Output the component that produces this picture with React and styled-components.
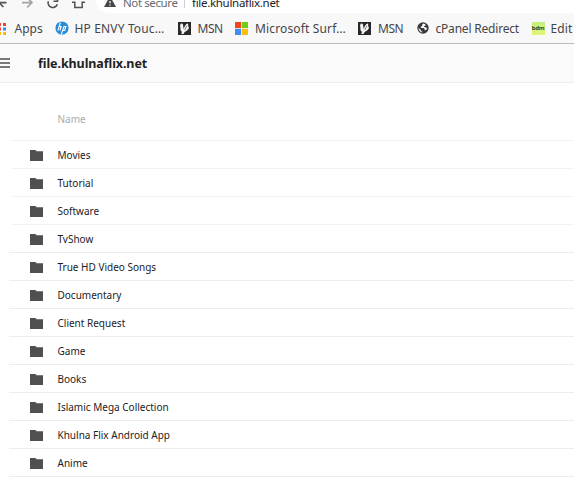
import React from "react";
import styled, { createGlobalStyle } from "styled-components";

const GlobalStyle = createGlobalStyle`
  * { box-sizing: border-box; }
  body { margin: 0; background: #fff; overflow: hidden; }
  #root { font-family: "Noto Sans", "Open Sans", sans-serif; }
`;

const Page = styled.div`
  width: 574px;
  height: 480px;
  overflow: hidden;
  background: #fff;
`;

const Label = styled.span`
  white-space: nowrap;
  letter-spacing: ${(p) => p.$spacing || 0}px;
`;

const AddressRow = styled.div`
  display: flex;
  height: 14px;
  background: #f8f8f9;
  overflow: hidden;
`;

const NavIcons = styled.svg`
  display: block;
  flex: none;
  width: 96px;
  height: 14px;
`;

const AddressField = styled.div`
  display: flex;
  flex: 1;
  height: 13px;
  background: #fff;
  border-bottom-left-radius: 13px 12px;
  padding-left: 8px;
  line-height: 16px;
  color: #68696c;
`;

const WarningIcon = styled.svg`
  display: block;
  flex: none;
  width: 12px;
  height: 10px;
  margin-right: 7px;
`;

const Security = styled(Label)`
  width: 61px;
  margin-top: -5px;
  font-size: 11.5px;
`;

const Divider = styled.i`
  width: 1px;
  height: 8px;
  margin-right: 7px;
  background: #cfcfd1;
`;

const Address = styled(Label)`
  margin-top: -5px;
  font-size: 11.5px;
  color: #202124;
`;

const BookmarkBar = styled.nav`
  display: flex;
  align-items: center;
  height: 30px;
  padding-bottom: 1px;
  background: #f8f8f9;
  border-bottom: 1px solid #b9bbbc;
  color: #44464a;
  font-size: 12px;
  line-height: 16px;
`;

const Bookmark = styled.div`
  display: flex;
  align-items: center;
  flex: none;
  width: ${(p) => p.$width}px;
  gap: ${(p) => p.$gap}px;
  svg { display: block; flex: none; }
`;

const BookmarkText = styled(Label)`
  padding-top: 2px;
`;

const Header = styled.header`
  display: flex;
  align-items: center;
  height: 39px;
  background: #fafafa;
  border-bottom: 1px solid #ededed;
`;

const MenuIcon = styled.svg`
  display: block;
  width: 10px;
  height: 12px;
  margin-right: 28px;
`;

const Title = styled.h1`
  margin: 0;
  padding-top: 2px;
  font-size: 12.5px;
  line-height: 18px;
  font-weight: 700;
  color: #222;
`;

const Listing = styled.main`
  margin-left: 9px;
`;

const ColumnHead = styled.div`
  height: 58px;
  margin-left: 3px;
  padding: 28px 0 0 45.5px;
  border-bottom: 1px solid #f2f2f2;
  color: #aaa;
  font-size: 10px;
  line-height: 16px;
`;

const Row = styled.div`
  display: flex;
  align-items: center;
  height: 28px;
  margin-left: ${(p) => (p.$faint ? 3 : 0)}px;
  padding-left: ${(p) => (p.$faint ? 18 : 21)}px;
  border-bottom: 1px solid ${(p) => (p.$faint ? "#f3f3f3" : "#ececec")};
  color: #1c1c1f;
  font-size: 10px;
  line-height: 16px;
`;

const FolderSvg = styled.svg`
  display: block;
  width: 13px;
  height: 11px;
  margin: 2px 14.5px 0 0;
`;

const Folder = () => (
  <FolderSvg viewBox="0 0 13 11">
    <path d="M0 0h5.3l1.4 1.2H13V11H0z" fill="#505050" />
  </FolderSvg>
);

const AppsIcon = () => (
  <svg width="7" height="13" viewBox="0 0 7 13">
    <path d="M0 1h1v3H0zM3 1h3v3H3z" fill="#e8453c" />
    <path d="M0 5.5h1v3H0z" fill="#e8453c" />
    <path d="M3 5.5h3v3H3z" fill="#4285f4" />
    <path d="M0 10h1v3H0zM3 10h3v3H3z" fill="#fbbc05" />
  </svg>
);

const HpIcon = () => (
  <svg width="14" height="14" viewBox="0 0 14 14">
    <circle cx="7" cy="7" r="6.6" fill="#278cd8" />
    <path d="M5.4 1.5 2.9 9.5M4.2 5.5h1.9L4.9 9.5M9 5.5l-2.6 7.5M8.8 5.5h2.1L9.6 9.5H7.8" fill="none" stroke="#fff" strokeWidth="1.1" />
  </svg>
);

const MsnIcon = () => (
  <svg width="13" height="13" viewBox="0 0 13 13">
    <path d="M0 0h13v13H0z" fill="#282828" />
    <path d="M3 1.6C4.6 1.2 5.4 2.6 5.2 4.4L5.8 7C6.4 4.6 7.8 1.8 9.8 1.6 10.6 2.6 10 3.6 10.2 4.6 11.4 5 11 6.4 10.2 7.2 9.6 8.4 8.6 8.8 7.4 9.4 6.4 10 6 10.8 5.6 12H3.2C4 10.6 4.2 9.8 3 8.8 1.8 8 2.8 6.4 2.4 5.2 1.8 4 2.2 2.4 3 1.6z" fill="#f4f4f4" />
    <path d="M8.8 3.8 6.8 8" stroke="#555" strokeWidth=".7" />
  </svg>
);

const WindowsIcon = () => (
  <svg width="13" height="13" viewBox="0 0 13 13">
    <path d="M0 0h6.1v6.1H0z" fill="#f5431f" />
    <path d="M6.9 0H13v6.1H6.9z" fill="#72cc12" />
    <path d="M0 6.9h6.1V13H0z" fill="#438df7" />
    <path d="M6.9 6.9H13V13H6.9z" fill="#fdbd0a" />
  </svg>
);

const GlobeIcon = () => (
  <svg width="12" height="12" viewBox="0 0 12 12">
    <circle cx="6" cy="6" r="5.7" fill="#37393c" />
    <path d="M6.3 1.6 5.2 2.6v1.2L3.8 5v1.1h3l.9 1.1v1l1.3-.1 1.1-1.3-1.2-1.6-1.5.1-.5-1.1 1.4-.5V2.2zM1.4 6l2.3 1.7.3 1.2 1.2.7v.9C3.2 10 1.7 8.6 1.4 6z" fill="#f8f8f9" />
  </svg>
);

const BadgeMark = styled.span`
  display: flex;
  align-items: center;
  justify-content: center;
  flex: none;
  width: 13px;
  height: 13px;
  background: linear-gradient(#c0f080, #e5f479);
  color: #354522;
  font-size: 6px;
  line-height: 8px;
  font-weight: 700;
  letter-spacing: -0.3px;
`;

const bookmarks = [
  { text: "Apps", icon: <AppsIcon />, width: 55, gap: 7.5, spacing: 0 },
  { text: "HP ENVY Touc…", icon: <HpIcon />, width: 123, gap: 5.5, spacing: 0.15 },
  { text: "MSN", icon: <MsnIcon />, width: 57, gap: 6.5, spacing: -0.5 },
  { text: "Microsoft Surf…", icon: <WindowsIcon />, width: 123, gap: 7, spacing: 0.15 },
  { text: "MSN", icon: <MsnIcon />, width: 58.5, gap: 7, spacing: -0.5 },
  { text: "cPanel Redirect", icon: <GlobeIcon />, width: 115, gap: 7, spacing: -0.2 },
  { text: "Edit", icon: <BadgeMark>bdm</BadgeMark>, width: 60, gap: 6, spacing: 0.1 },
];

const folders = [
  "Movies",
  "Tutorial",
  "Software",
  "TvShow",
  "True HD Video Songs",
  "Documentary",
  "Client Request",
  "Game",
  "Books",
  "Islamic Mega Collection",
  "Khulna Flix Android App",
  "Anime",
];

export default function App() {
  return (
    <Page>
      <GlobalStyle />
      <AddressRow>
        <NavIcons viewBox="0 0 96 14" fill="none" stroke="#505255" strokeWidth="1.6">
          <path d="M0 2.6h6.5M-1 2.6 3.4 7" />
          <path d="M22 2.6h9M27.2 7.4 32 2.6 28.8-.6" stroke="#a1a3a6" />
          <path d="M48.3 1.2a4.7 4.7 0 1 0 9 3" />
          <path d="M53.5 1.3h4V-2" />
          <path d="M74.6 2v5.8h2.6V4.5h2.6v3.3h2.6V2" strokeWidth="0" />
          <path d="M74.8 1.5v6h7.4v-6M72 2.3h3.4M81.6 2.3H85" strokeWidth="1.5" />
        </NavIcons>
        <AddressField>
          <WarningIcon viewBox="0 0 12 10">
            <path d="M5-2h2l5 9H0z" fill="#444649" />
            <path d="M5.4 1h1.2v2.2H5.4zM5.4 4.5h1.2v1.2H5.4z" fill="#fff" />
          </WarningIcon>
          <Security $spacing={-0.4}>Not secure</Security>
          <Divider />
          <Address $spacing={-0.3}>file.khulnaflix.net</Address>
        </AddressField>
      </AddressRow>
      <BookmarkBar>
        {bookmarks.map((b, i) => (
          <Bookmark key={i} $width={b.width} $gap={b.gap}>
            {b.icon}
            <BookmarkText $spacing={b.spacing}>{b.text}</BookmarkText>
          </Bookmark>
        ))}
      </BookmarkBar>
      <Header>
        <MenuIcon viewBox="0 0 10 12">
          <path d="M0 2h10M0 6h10M0 10h10" stroke="#4d4d4d" strokeWidth="1.7" />
        </MenuIcon>
        <Title><Label $spacing={-0.08}>file.khulnaflix.net</Label></Title>
      </Header>
      <Listing>
        <ColumnHead><Label>Name</Label></ColumnHead>
        {folders.map((name, i) => (
          <Row key={name} $faint={i < 3}>
            <Folder />
            <Label>{name}</Label>
          </Row>
        ))}
      </Listing>
    </Page>
  );
}
